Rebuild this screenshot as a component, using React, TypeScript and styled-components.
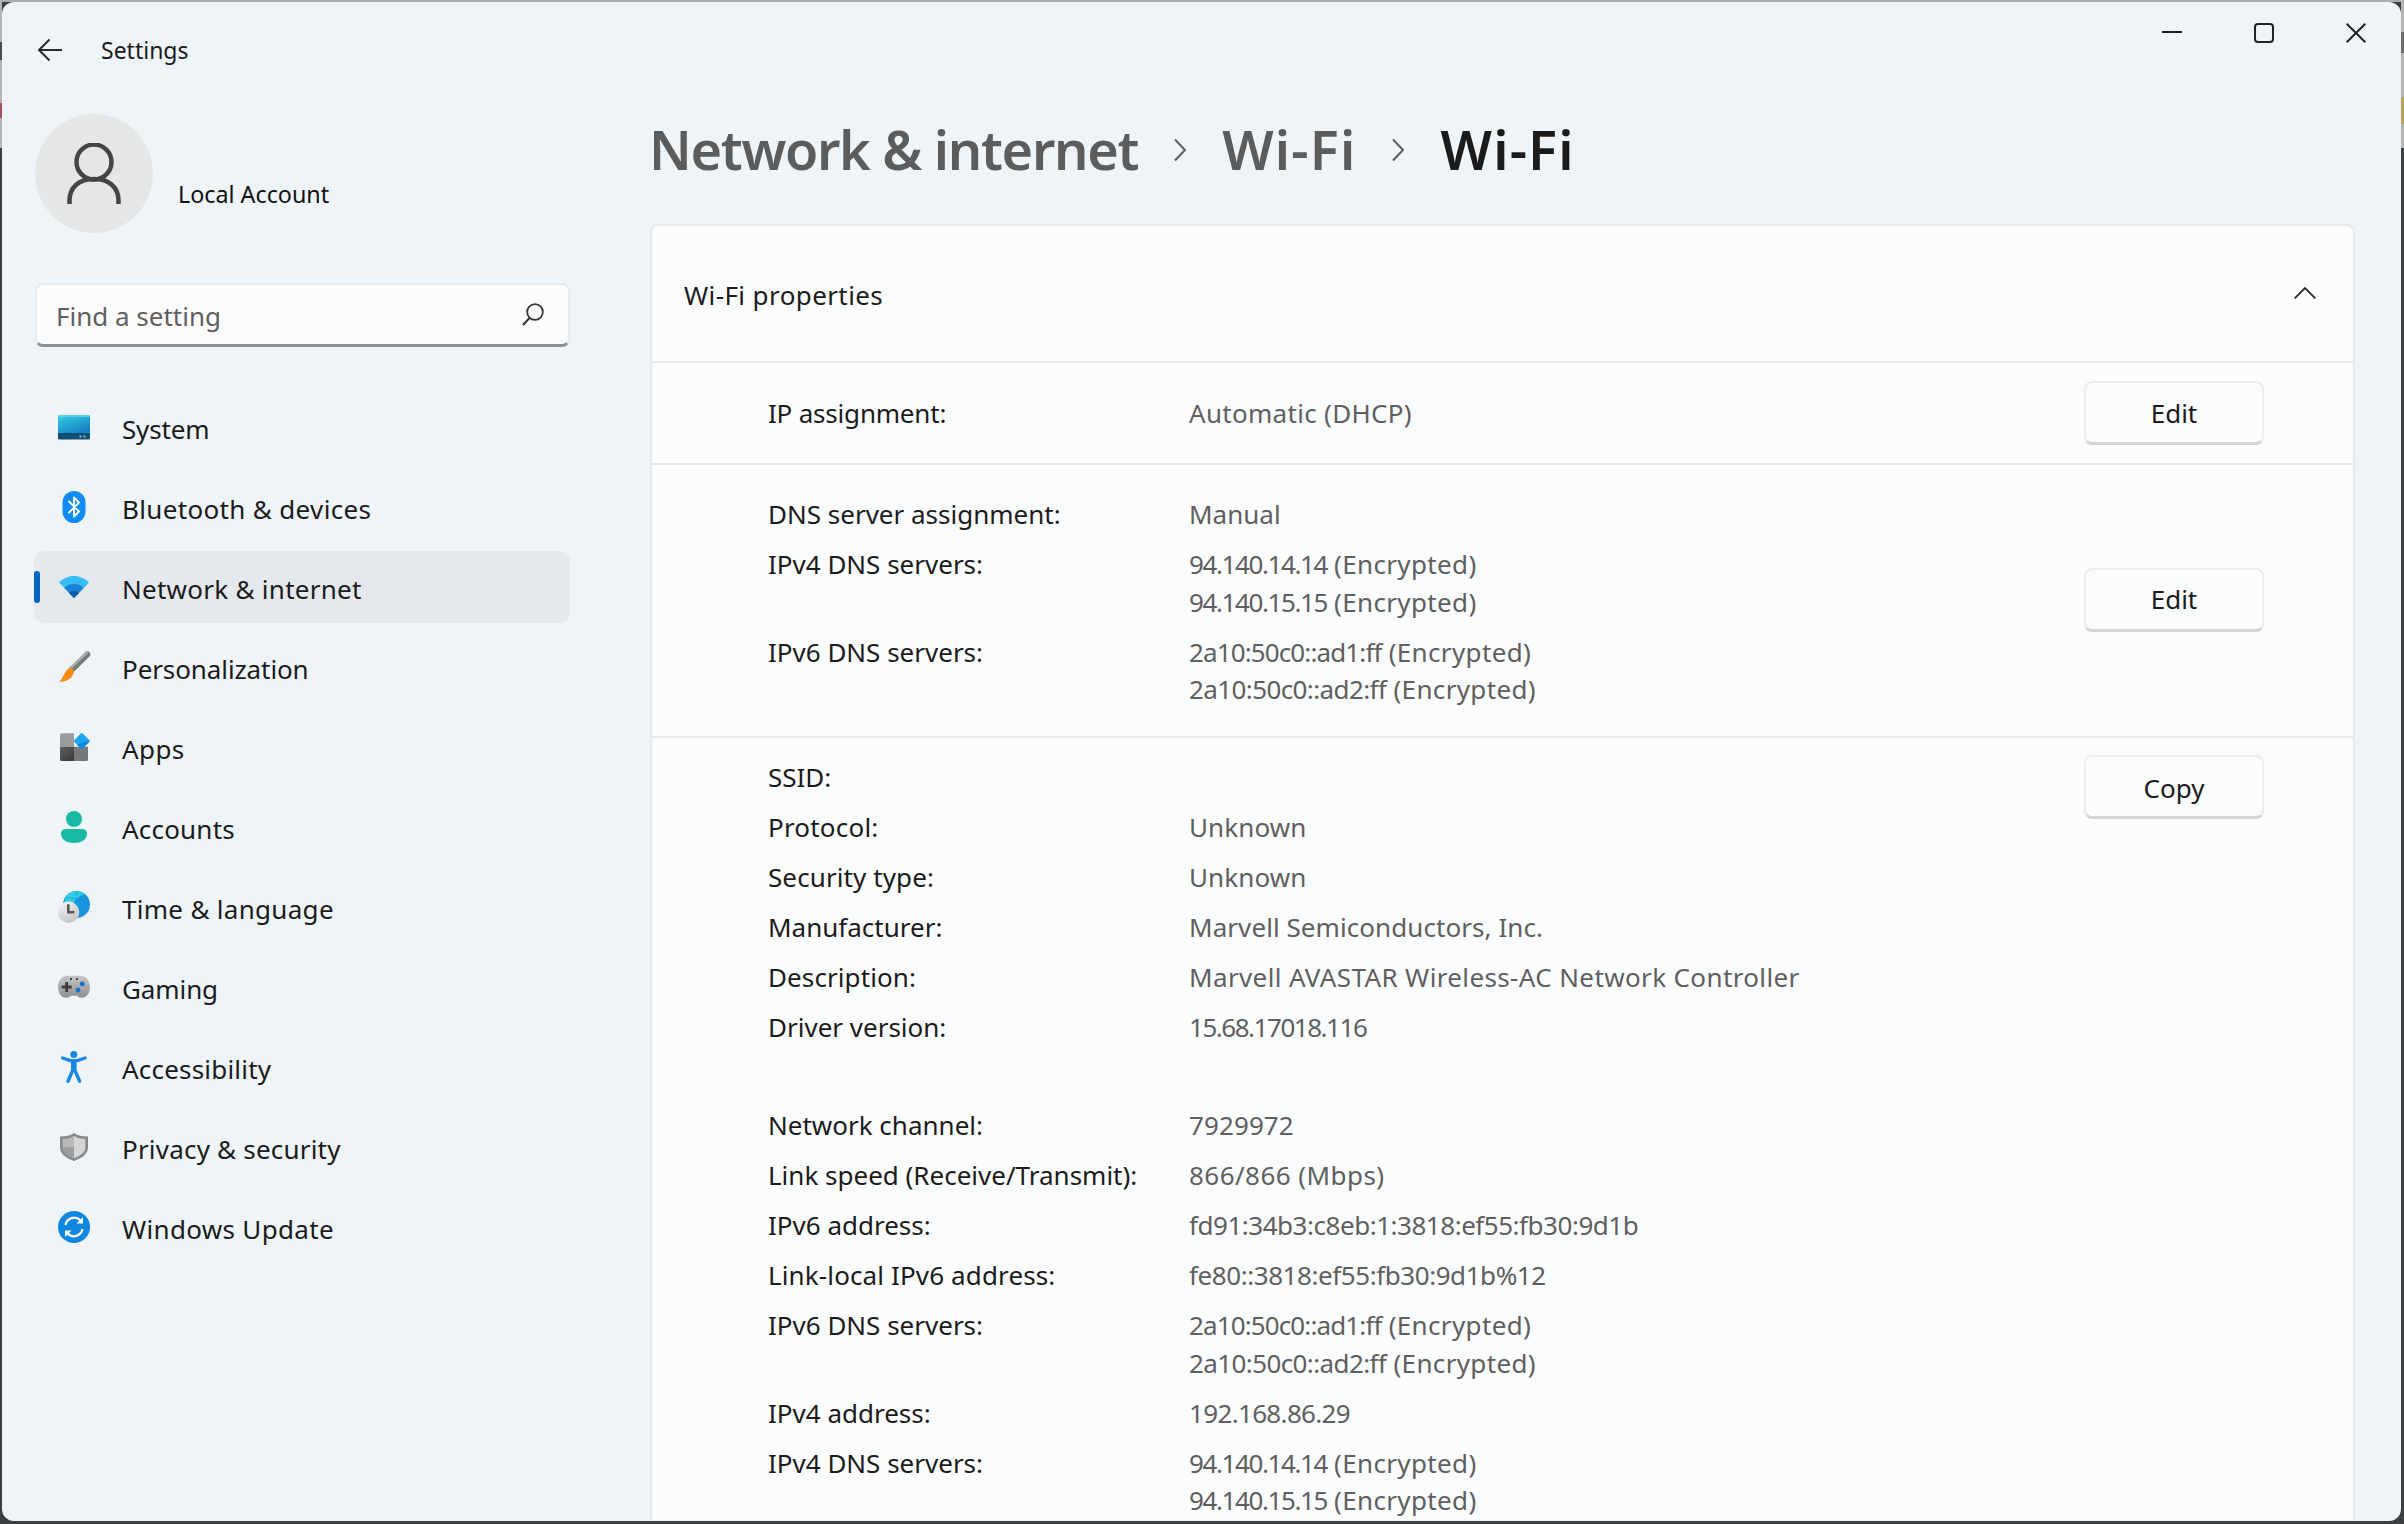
import React from "react";
import styled, { createGlobalStyle } from "styled-components";

const FONT = `"Noto Sans", "Open Sans", "Liberation Sans", sans-serif`;

const Global = createGlobalStyle`
  html, body { margin: 0; padding: 0; height: 100%; background: #3a3f44; overflow: hidden; }
  #root { height: 100%; }
  * { box-sizing: border-box; }
`;

const Screen = styled.div`
  width: 2404px;
  height: 1524px;
  padding: 2px 3px 3px 2px;
  background:
    linear-gradient(#6e6e6e, #6e6e6e) right 0 top 32px / 3px 21px no-repeat,
    linear-gradient(#b9a35a, #b9a35a) right 0 top 97px / 3px 27px no-repeat,
    linear-gradient(#4a4a50, #4a4a50) left 0 top 42px / 2px 18px no-repeat,
    linear-gradient(#a8505c, #a8505c) left 0 top 103px / 2px 15px no-repeat,
    linear-gradient(#b4b4b4, #b4b4b4) left 0 top 0 / 2px 148px no-repeat,
    linear-gradient(#b4b4b4, #b4b4b4) right 0 top 0 / 3px 148px no-repeat,
    linear-gradient(#adadad, #adadad) left 0 top 0 / 100% 2px no-repeat,
    #3a3f44;
  font-family: ${FONT};
  color: #1b1b1b;
`;

const Win = styled.div`
  position: relative;
  width: 100%;
  height: 100%;
  background: #eff4f9;
  border-radius: 12px;
  overflow: hidden;
  display: flex;
  flex-direction: column;
`;

const TitleBar = styled.header`
  height: 96px;
  flex: none;
  display: flex;
  align-items: flex-start;
  padding: 36px 0 0 35px;
`;

const AppName = styled.span`
  font-size: 23px;
  line-height: 30px;
  margin-left: 38px;
  margin-top: -3px;
`;

const Controls = styled.div`
  margin-left: auto;
  margin-right: 35px;
  margin-top: -15px;
  display: flex;
  gap: 72px;
`;

const Body = styled.div`
  flex: 1;
  min-height: 0;
  display: flex;
`;

const Sidebar = styled.aside`
  width: 648px;
  flex: none;
  padding: 16px 0 0 32px;
`;

const Account = styled.div`
  display: flex;
  align-items: center;
  height: 119px;
  padding-left: 1px;
`;

const Avatar = styled.div`
  width: 118px;
  height: 119px;
  border-radius: 50%;
  background: #e5e6e6;
  display: flex;
  align-items: center;
  justify-content: center;
`;

const AccountName = styled.span`
  font-size: 23.3px;
  line-height: 32px;
  margin: 41px 0 0 25px;
  color: #111;
`;

const Search = styled.div`
  margin: 50px 0 0 1px;
  width: 535px;
  height: 64px;
  background: #fcfcfd;
  border: 2px solid #e8eaec;
  border-bottom: 3px solid #8e8f90;
  border-radius: 8px;
  display: flex;
  align-items: center;
  justify-content: space-between;
  padding: 0 24px 0 20px;
  font-size: 26px;
  color: #5f5f5f;
`;

const SearchText = styled.span`
  padding-top: 2px;
  margin-left: -1px;
`;

const Nav = styled.nav`
  margin-top: 44px;
  display: flex;
  flex-direction: column;
  gap: 8px;
`;

const NavItem = styled.div<{ $active?: boolean }>`
  position: relative;
  width: 536px;
  height: 72px;
  border-radius: 10px;
  display: flex;
  align-items: center;
  gap: 32px;
  padding-left: 24px;
  background: ${(p) => (p.$active ? "#e5e8ed" : "transparent")};
`;

const Accent = styled.span`
  position: absolute;
  left: 0;
  top: 20px;
  width: 6px;
  height: 32px;
  border-radius: 3px;
  background: #0067c0;
`;

const IconBox = styled.span`
  width: 32px;
  height: 32px;
  flex: none;
  display: block;
  svg { display: block; overflow: visible; }
`;

const NavLabel = styled.span<{ $ls: number }>`
  font-size: 26px;
  line-height: 36px;
  letter-spacing: ${(p) => p.$ls}px;
  padding-top: 3px;
`;

const Main = styled.main`
  flex: 1;
  min-width: 0;
  padding-right: 46px;
`;

const Crumbs = styled.h1`
  margin: 15px 0 0 -1px;
  height: 72px;
  display: flex;
  align-items: center;
  gap: 35px;
  font-size: 54px;
  font-weight: 600;
  line-height: 72px;
`;

const Crumb = styled.span<{ $current?: boolean; $ls: number }>`
  color: ${(p) => (p.$current ? "#1b1b1b" : "#5c5c5c")};
  letter-spacing: ${(p) => p.$ls}px;
`;

const CrumbSepMark = styled.svg`
  margin-top: 2px;
`;

const Card = styled.section`
  margin-top: 39px;
  background: #fbfcfd;
  border: 2px solid #e7e9eb;
  border-bottom: none;
  border-radius: 8px 8px 0 0;
`;

const CardHead = styled.div`
  height: 135px;
  display: flex;
  align-items: center;
  justify-content: space-between;
  padding: 3px 37px 0 32px;
  font-size: 26px;
  letter-spacing: 0.4px;
`;

const Chevron = styled.svg`
  margin-top: -4px;
`;

const Section = styled.div<{ $pad: string; $align: string }>`
  border-top: 2px solid #e5e7e9;
  padding: ${(p) => p.$pad};
  display: flex;
  align-items: ${(p) => p.$align};
  justify-content: space-between;
`;

const Props = styled.dl`
  margin: 0;
  display: grid;
  grid-template-columns: 420px 1fr;
  row-gap: 12.5px;
  font-size: 26px;
  line-height: 37.5px;
`;

const ShortProps = styled(Props)`
  padding-top: 2px;
`;

const LongProps = styled(Props)`
  margin-top: 4px;
`;

const Key = styled.dt<{ $ls: number }>`
  margin: 0;
  letter-spacing: ${(p) => p.$ls}px;
`;

const Val = styled.dd`
  margin: 0 0 0 1px;
  color: #5f5f5f;
`;

const ValLine = styled.div`
  white-space: pre;
`;

const Run = styled.span<{ $ls: number }>`
  letter-spacing: ${(p) => p.$ls}px;
`;

const Spacer = styled.div`
  grid-column: 1 / -1;
  height: 36px;
`;

const Btn = styled.button<{ $up?: number; $textDown?: number }>`
  width: 180px;
  height: 64px;
  flex: none;
  margin-top: ${(p) => -(p.$up ?? 0)}px;
  background: #fbfcfd;
  border: 2px solid #eceded;
  border-bottom: 3px solid #d3d4d5;
  border-radius: 8px;
  font-family: ${FONT};
  font-size: 26px;
  color: #1b1b1b;
  padding: ${(p) => p.$textDown ?? 0}px 0 0;
`;

const Si = ({ children }: { children: React.ReactNode }) => (
  <IconBox>
    <svg width="32" height="32" viewBox="0 0 32 32">{children}</svg>
  </IconBox>
);

const SystemIcon = () => (
  <Si>
    <defs>
      <linearGradient id="sys" x1="0" y1="0" x2="0.6" y2="1">
        <stop offset="0" stopColor="#34d0e2" />
        <stop offset="1" stopColor="#1682c6" />
      </linearGradient>
    </defs>
    <path d="M1.500 4h29a1.500 1.500 0 0 1 1.500 1.500V22H0V5.500A1.500 1.500 0 0 1 1.500 4z" fill="url(#sys)" />
    <path d="M1 4h30l1 2H0z" fill="#56d3e2" />
    <path d="M0 22h32v5a1.500 1.500 0 0 1-1.500 1.500H1.500A1.500 1.500 0 0 1 0 27z" fill="#0e4f74" />
    <rect x="21.500" y="24.500" width="2" height="2" fill="#9ab4c4" />
    <rect x="25.500" y="24.500" width="2" height="2" fill="#9ab4c4" />
  </Si>
);
const BluetoothIcon = () => (
  <Si>
    <rect x="4.500" y="0" width="23" height="32" rx="11.500" fill="#0f8cf6" />
    <path d="M11 10.500l10 10-5 5V6.500l5 5-10 10" fill="none" stroke="#fff" strokeWidth="1.900" strokeLinejoin="round" strokeLinecap="round" />
  </Si>
);
const WifiIcon = () => (
  <Si>
    <path d="M1 11.500C5 7.500 10.300 5 16 5s11 2.500 15 6.500L16 27z" fill="#38bdf4" />
    <path d="M6.500 17C9 14.500 12.400 13 16 13s7 1.500 9.500 4L16 27z" fill="#1a7fd6" />
    <path d="M11 22c1.300-1.300 3-2 5-2s3.700.7 5 2l-5 5z" fill="#0c5ca8" />
  </Si>
);
const BrushIcon = () => (
  <Si>
    <path d="M29.300 3.300L13.700 19" fill="none" stroke="#77787a" strokeWidth="6" strokeLinecap="round" />
    <path d="M29.500 1.200L12 17.500" fill="none" stroke="#a9aaac" strokeWidth="2.400" strokeLinecap="round" />
    <path d="M8 20.200C9.800 17.700 12.300 16.600 14 17.200L15.600 19C16.500 25.500 10 31.300 .7 30.600 4 29 5.200 24 8 20.200z" fill="#f78a14" />
  </Si>
);
const AppsIcon = () => (
  <Si>
    <defs>
      <linearGradient id="ap" x1="0" y1="0" x2="1" y2="1">
        <stop offset="0" stopColor="#5e5e60" />
        <stop offset="1" stopColor="#38383a" />
      </linearGradient>
    </defs>
    <path d="M2 3.800A1.500 1.500 0 0 1 3.500 2.300H16v13.400H2z" fill="#9a9b9d" />
    <path d="M2 15.700h14V30H3.500A1.500 1.500 0 0 1 2 28.500z" fill="url(#ap)" />
    <path d="M16 15.700h14v12.800a1.500 1.500 0 0 1-1.500 1.500H16z" fill="#77787a" />
    <path d="M22.700 2.400a1.500 1.500 0 0 1 2 0l6.400 6.500a1.500 1.500 0 0 1 0 2.100l-6.400 6.400a1.500 1.500 0 0 1-2 0l-6.300-6.400a1.500 1.500 0 0 1 0-2.100z" fill="#1ea6ee" />
    <path d="M31.100 9.600a1.500 1.500 0 0 1 0 1.400l-6.400 6.400a1.500 1.500 0 0 1-2 0l-3.700-3.700z" fill="#1087d8" />
  </Si>
);
const AccountIcon = () => (
  <Si>
    <circle cx="16" cy="8" r="8" fill="#18b9a3" />
    <path d="M3 22.500C3 19.500 5 18 8 18h16c3 0 5 1.500 5 4.500C29 29 23 32 16 32S3 29 3 22.500z" fill="#18b9a3" />
  </Si>
);
const TimeIcon = () => (
  <Si>
    <defs>
      <linearGradient id="ck" x1="0.2" y1="0" x2="0.8" y2="1">
        <stop offset="0" stopColor="#f1f1f1" />
        <stop offset="1" stopColor="#c2c2c2" />
      </linearGradient>
    </defs>
    <circle cx="18.500" cy="13.500" r="13.500" fill="#1a94de" />
    <path d="M8.500 4.500A13.500 13.500 0 0 1 27 3C21 5 15 9 12 20 7 17 5.500 10 8.500 4.500z" fill="#33cde2" />
    <path d="M18.500 0v27M5 13.500h27M8 6c6.500 2 14.500 2 21 0" stroke="#12a3db" strokeWidth="1.200" fill="none" opacity=".75" />
    <circle cx="10.500" cy="21.300" r="10.700" fill="url(#ck)" />
    <path d="M10.300 13.300v8h6" stroke="#555" strokeWidth="2.500" fill="none" />
  </Si>
);
const GamingIcon = () => (
  <Si>
    <defs>
      <linearGradient id="gm" x1="0" y1="0" x2="0" y2="1">
        <stop offset="0" stopColor="#c6c6c7" />
        <stop offset="1" stopColor="#8f8f91" />
      </linearGradient>
    </defs>
    <path d="M10 4.700h12C28 4.700 32 9.500 32 16c0 6.500-3.500 10.700-8 10.700-2.500 0-3.500-1-5-2H13c-1.500 1-2.500 2-5 2-4.500 0-8-4.200-8-10.700C0 9.500 4 4.700 10 4.700z" fill="url(#gm)" />
    <path d="M3.700 16h10M8.700 11v10" stroke="#3c3c3c" strokeWidth="2.800" />
    <circle cx="24.300" cy="13" r="2.400" fill="#1572cf" />
    <circle cx="20" cy="19" r="2.400" fill="#1572cf" />
    <rect x="12" y="7" width="2" height="2" fill="#444" />
    <rect x="18" y="7" width="2" height="2" fill="#444" />
  </Si>
);
const AccessIcon = () => (
  <Si>
    <circle cx="15.800" cy="3.500" r="3.500" fill="#1888e2" />
    <path d="M4.500 7l8 2.600h6.600l8-2.600" fill="none" stroke="#1888e2" strokeWidth="3.300" strokeLinecap="round" strokeLinejoin="round" />
    <path d="M13 9.500h5.600v9.500l4.600 10.500a1.700 1.700 0 0 1-3.200 1.300L15.800 21l-4.200 10a1.700 1.700 0 0 1-3.200-1.400L13 19z" fill="#1888e2" />
  </Si>
);
const ShieldIcon = () => (
  <Si>
    <path d="M16 2c3.500 2.600 8.500 3.400 14 3.500v11c0 6-5.500 10.500-14 13.500C7.500 27 2 22.500 2 16.500v-11c5.500-.1 10.500-.9 14-3.500z" fill="#888a8c" />
    <path d="M16 5c3 2 7 2.800 11.300 3v8.500c0 4.700-4.600 8.300-11.300 10.700z" fill="#d4d5d6" />
    <path d="M16 5c-3 2-7 2.800-11.300 3v8.500c0 4.700 4.600 8.300 11.300 10.700V16z" fill="#b9babb" />
    <path d="M4.700 16.500c0 4.700 4.600 8.300 11.300 10.700V16z" fill="#9d9e9f" />
  </Si>
);
const UpdateIcon = () => (
  <Si>
    <circle cx="16" cy="16" r="16" fill="#0f86e0" />
    <path d="M7.500 14A8.800 8.800 0 0 1 22.500 9.500l2 2" fill="none" stroke="#fff" strokeWidth="2.200" />
    <path d="M25 6v6.500h-6.500z" fill="#fff" />
    <path d="M24.500 18A8.800 8.800 0 0 1 9.500 22.500l-2-2" fill="none" stroke="#fff" strokeWidth="2.200" />
    <path d="M7 26v-6.500h6.500z" fill="#fff" />
  </Si>
);

const items: [string, React.FC, number, boolean?][] = [
  ["System", SystemIcon, -0.15],
  ["Bluetooth & devices", BluetoothIcon, 0.34],
  ["Network & internet", WifiIcon, 0.27, true],
  ["Personalization", BrushIcon, -0.1],
  ["Apps", AppsIcon, 0.4],
  ["Accounts", AccountIcon, 0.2],
  ["Time & language", TimeIcon, 0.3],
  ["Gaming", GamingIcon, -0.1],
  ["Accessibility", AccessIcon, 0.2],
  ["Privacy & security", ShieldIcon, 0.2],
  ["Windows Update", UpdateIcon, 0.32],
];

const CrumbSep = () => (
  <CrumbSepMark width="14" height="24" viewBox="0 0 14 24">
    <path d="M2 1.500L12 12 2 22.500" fill="none" stroke="#5c5c5c" strokeWidth="2" />
  </CrumbSepMark>
);

type RunSpec = [string, number];
const ENC: RunSpec = [" (Encrypted)", 0.35];
const V4A: RunSpec[] = [["94.140.14.14", -1.4], ENC];
const V4B: RunSpec[] = [["94.140.15.15", -1.4], ENC];
const V6A: RunSpec[] = [["2a10:50c0::ad1:ff", -0.88], ENC];
const V6B: RunSpec[] = [["2a10:50c0::ad2:ff", -0.6], ENC];

const keySpacing: Record<string, number> = {
  "IP assignment:": -0.2,
  "Link-local IPv6 address:": 0.13,
  "Protocol:": 0.2,
  "Security type:": 0.1,
  "Description:": 0.1,
};

const row = (k: string, ...lines: RunSpec[][]) => (
  <React.Fragment key={k + lines[0][0][0]}>
    <Key $ls={keySpacing[k] ?? 0}>{k}</Key>
    <Val>
      {lines.map((runs) => (
        <ValLine key={runs[0][0]}>
          {runs.map(([t, ls]) => (
            <Run key={t} $ls={ls}>{t}</Run>
          ))}
        </ValLine>
      ))}
    </Val>
  </React.Fragment>
);

export default function App() {
  return (
    <Screen>
      <Global />
      <Win>
        <TitleBar>
          <svg width="26" height="24" viewBox="0 0 26 24">
            <path d="M25 12H2M12.500 1.500L2 12l10.500 10.500" fill="none" stroke="#2a2a2a" strokeWidth="2" />
          </svg>
          <AppName>Settings</AppName>
          <Controls>
            <svg width="20" height="20" viewBox="0 0 20 20">
              <path d="M0 9h20" stroke="#222" strokeWidth="2" />
            </svg>
            <svg width="20" height="20" viewBox="0 0 20 20">
              <rect x="1" y="1" width="18" height="18" rx="3" fill="none" stroke="#222" strokeWidth="2" />
            </svg>
            <svg width="20" height="20" viewBox="0 0 20 20">
              <path d="M.7.700l18.600 18.600M19.300.700L.7 19.300" stroke="#222" strokeWidth="2" />
            </svg>
          </Controls>
        </TitleBar>
        <Body>
          <Sidebar>
            <Account>
              <Avatar>
                <svg width="54" height="62" viewBox="0 0 54 62">
                  <circle cx="27" cy="19" r="17.500" fill="none" stroke="#454545" strokeWidth="4.500" />
                  <path d="M2.500 61v-3C2.500 44 12 36 27 36s24.500 8 24.500 22v3" fill="none" stroke="#454545" strokeWidth="4.500" />
                </svg>
              </Avatar>
              <AccountName>Local Account</AccountName>
            </Account>
            <Search>
              <SearchText>Find a setting</SearchText>
              <svg width="22" height="23" viewBox="0 0 22 23">
                <circle cx="13" cy="9" r="7.800" fill="none" stroke="#333" strokeWidth="1.800" />
                <path d="M7.500 15L1 22" stroke="#333" strokeWidth="2" />
              </svg>
            </Search>
            <Nav>
              {items.map(([label, Icon, ls, active]) => (
                <NavItem key={label} $active={active}>
                  {active && <Accent />}
                  <Icon />
                  <NavLabel $ls={ls}>{label}</NavLabel>
                </NavItem>
              ))}
            </Nav>
          </Sidebar>
          <Main>
            <Crumbs>
              <Crumb $ls={-1.3}>Network &amp; internet</Crumb>
              <CrumbSep />
              <Crumb $ls={1.2}>Wi-Fi</Crumb>
              <CrumbSep />
              <Crumb $current $ls={1.2}>Wi-Fi</Crumb>
            </Crumbs>
            <Card>
              <CardHead>
                Wi-Fi properties
                <Chevron width="22" height="12" viewBox="0 0 22 12">
                  <path d="M.7 11.300L11 1l10.300 10.300" fill="none" stroke="#2a2a2a" strokeWidth="1.800" />
                </Chevron>
              </CardHead>
              <Section $pad="18px 89px 18px 116px" $align="center">
                <ShortProps>{row("IP assignment:", [["Automatic (DHCP)", 0.3]])}</ShortProps>
                <Btn>Edit</Btn>
              </Section>
              <Section $pad="31px 89px 27px 116px" $align="center">
                <Props>
                  {row("DNS server assignment:", [["Manual", 0]])}
                  {row("IPv4 DNS servers:", V4A, V4B)}
                  {row("IPv6 DNS servers:", V6A, V6B)}
                </Props>
                <Btn $up={5}>Edit</Btn>
              </Section>
              <Section $pad="17px 89px 0 116px" $align="flex-start">
                <LongProps>
                  {row("SSID:", [["\u00a0", 0]])}
                  {row("Protocol:", [["Unknown", 0.1]])}
                  {row("Security type:", [["Unknown", 0.1]])}
                  {row("Manufacturer:", [["Marvell Semiconductors, Inc.", 0.07]])}
                  {row("Description:", [["Marvell AVASTAR Wireless-AC Network Controller", 0.37]])}
                  {row("Driver version:", [["15.68.17018.116", -1.47]])}
                  <Spacer />
                  {row("Network channel:", [["7929972", 0.1]])}
                  {row("Link speed (Receive/Transmit):", [["866/866 (Mbps)", 0.45]])}
                  {row("IPv6 address:", [["fd91:34b3:c8eb:1:3818:ef55:fb30:9d1b", -0.47]])}
                  {row("Link-local IPv6 address:", [["fe80::3818:ef55:fb30:9d1b%12", -0.43]])}
                  {row("IPv6 DNS servers:", V6A, V6B)}
                  {row("IPv4 address:", [["192.168.86.29", -0.66]])}
                  {row("IPv4 DNS servers:", V4A, V4B)}
                </LongProps>
                <Btn $textDown={4}>Copy</Btn>
              </Section>
            </Card>
          </Main>
        </Body>
      </Win>
    </Screen>
  );
}
